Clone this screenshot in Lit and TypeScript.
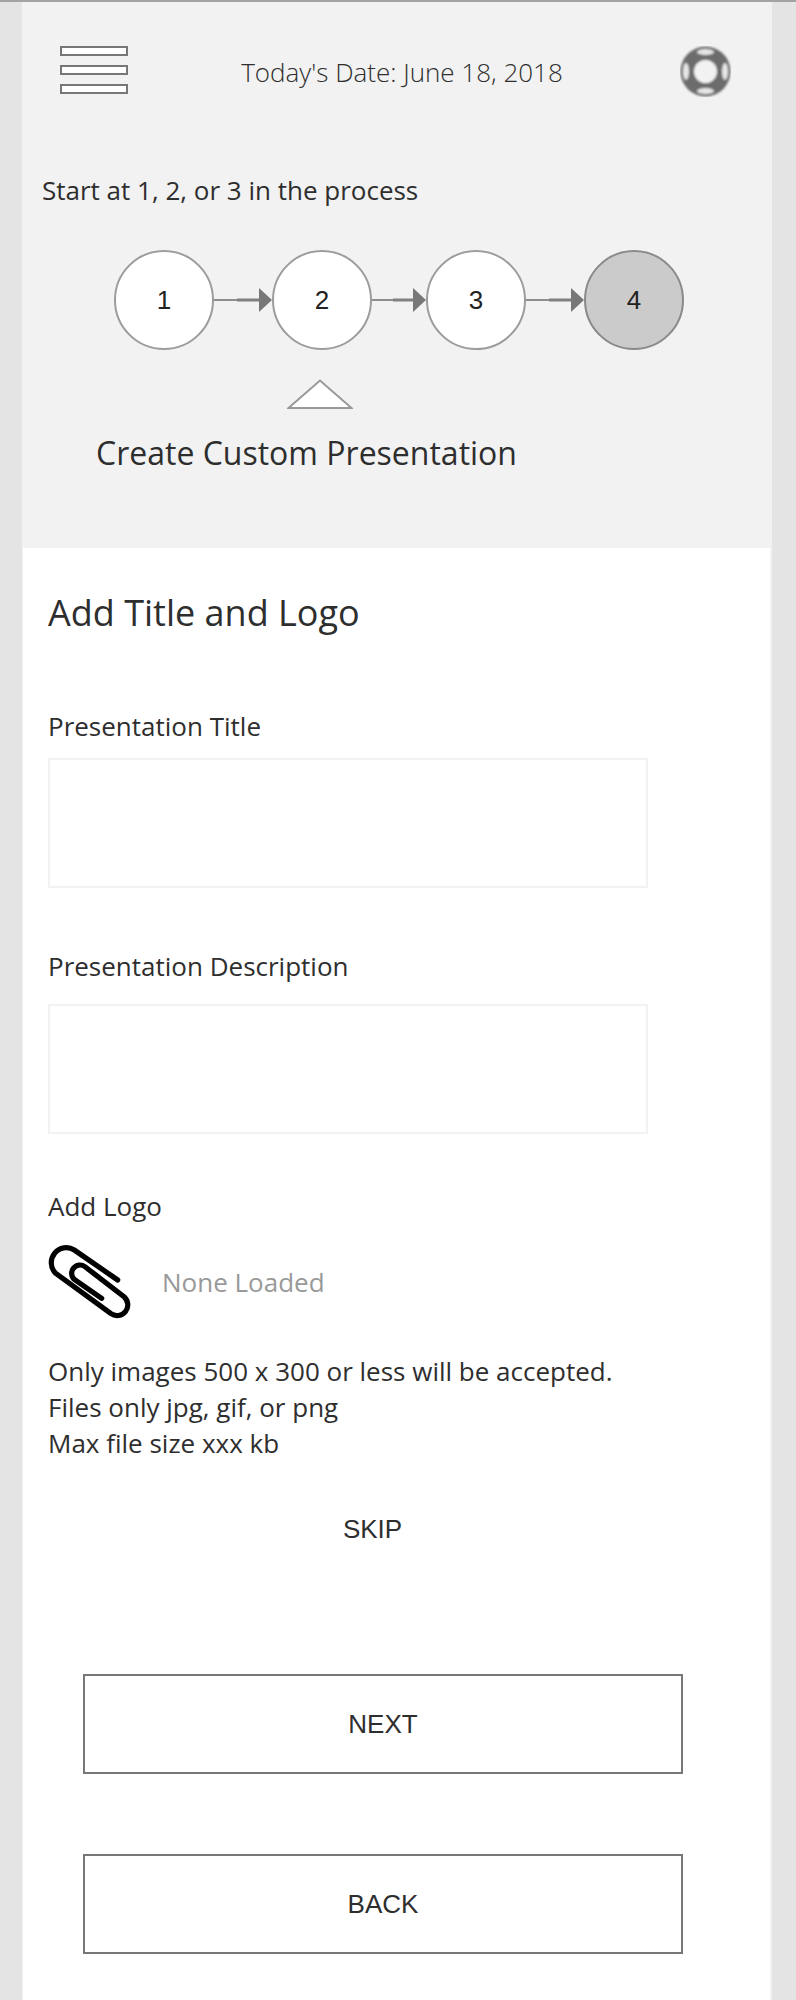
import { LitElement, html, css } from 'lit';
import { customElement } from 'lit/decorators.js';

const steps = ['1', '2', '3', '4'];

@customElement('app-root')
export class AppRoot extends LitElement {
  static styles = css`
    :host {
      display: block;
      width: 796px;
      height: 2000px;
      overflow: hidden;
      background: #e4e4e4;
      border-top: 2px solid #a3a3a3;
      box-sizing: border-box;
      font-family: 'Open Sans', sans-serif;
      color: #2e2e2e;
    }
    .page {
      margin: 0 24px 0 22px;
      height: 1998px;
      background: #f2f2f2;
      display: flex;
      flex-direction: column;
    }
    .top {
      height: 546px;
      box-sizing: border-box;
      flex: none;
    }
    .header {
      display: flex;
      align-items: flex-start;
      padding: 44px 41px 0 38px;
      height: 124px;
      box-sizing: border-box;
    }
    .burger {
      width: 68px;
      display: flex;
      flex-direction: column;
      gap: 9px;
    }
    .burger span {
      display: block;
      height: 10px;
      box-sizing: border-box;
      background: #fff;
      border: 2px solid #777;
    }
    .date {
      flex: 1;
      text-align: center;
      font-size: 26px;
      font-weight: 300;
      line-height: 36px;
      padding-top: 8px;
      padding-right: 4px;
    }
    .buoy {
      width: 51px;
      height: 51px;
      display: block;
    }
    .hint {
      margin: 47px 0 0 20px;
      font-size: 26px;
      line-height: 34px;
    }
    .flow {
      display: flex;
      align-items: center;
      margin: 43px 0 0 92px;
    }
    .step {
      width: 100px;
      height: 100px;
      box-sizing: border-box;
      flex: none;
      border-radius: 50%;
      border: 2px solid #9c9c9c;
      background: #fff;
      display: flex;
      align-items: center;
      justify-content: center;
      font-family: 'Liberation Sans', sans-serif;
      font-size: 26px;
      color: #222;
    }
    .step.off {
      background: #cbcbcb;
      border-color: #8a8a8a;
    }
    .arrow {
      display: block;
      flex: none;
      height: 26px;
    }
    .pointer {
      display: block;
      margin: 29px 0 0 265px;
    }
    .sub {
      margin: 22px 0 0 74px;
      font-size: 32px;
      line-height: 44px;
    }
    .form {
      flex: 1;
      background: #fff;
      margin: 0 2px 0 1px;
      padding: 0 0 0 25px;
    }
    h2 {
      margin: 40px 0 0;
      font-size: 36px;
      font-weight: 400;
      line-height: 50px;
    }
    label {
      display: block;
      font-size: 26px;
      line-height: 36px;
    }
    .first {
      margin-top: 70px;
    }
    .box {
      width: 600px;
      height: 130px;
      box-sizing: border-box;
      border: 2px solid #f2f2f2;
      margin-top: 14px;
    }
    .second {
      margin-top: 60px;
    }
    .second + .box {
      margin-top: 20px;
    }
    .third {
      margin-top: 54px;
    }
    .logo {
      display: flex;
      align-items: center;
      margin-top: 20px;
    }
    .clip {
      display: block;
      width: 84px;
      height: 78px;
      flex: none;
    }
    .none {
      margin-left: 30px;
      font-size: 26px;
      color: #999;
      padding-bottom: 3px;
    }
    .rules {
      margin-top: 31px;
      font-size: 26px;
      line-height: 36px;
    }
    .skip {
      margin: 50px 0 0 0;
      width: 649px;
      text-align: center;
      font-family: 'Liberation Sans', sans-serif;
      font-size: 26px;
      line-height: 36px;
    }
    .btn {
      width: 600px;
      height: 100px;
      box-sizing: border-box;
      margin-left: 35px;
      border: 2px solid #777;
      display: flex;
      align-items: center;
      justify-content: center;
      font-family: 'Liberation Sans', sans-serif;
      font-size: 26px;
    }
    .skip + .btn {
      margin-top: 127px;
    }
    .btn + .btn {
      margin-top: 80px;
    }
  `;

  // line goes lighter then darker before the head, like the mockup
  arrowSvg(w: number) {
    const mid = Math.round((w - 13) / 2);
    return html`<svg class="arrow" width=${w} height="26" viewBox="0 0 ${w} 26">
      <line x1="0" y1="13" x2=${mid} y2="13" stroke="#8e8e8e" stroke-width="2"></line>
      <line x1=${mid} y1="13" x2=${w - 12} y2="13" stroke="#808080" stroke-width="3"></line>
      <path d="M${w - 13} 1L${w} 13L${w - 13} 25Z" fill="#777"></path>
    </svg>`;
  }

  render() {
    return html`
      <div class="page">
        <div class="top">
          <div class="header">
            <div class="burger"><span></span><span></span><span></span></div>
            <div class="date">Today's Date: June 18, 2018</div>
            <svg class="buoy" viewBox="0 0 51 51">
              <defs>
                <filter id="soft"><feGaussianBlur stdDeviation="0.8"></feGaussianBlur></filter>
              </defs>
              <g filter="url(#soft)">
                <circle cx="25.5" cy="25.5" r="25" fill="#6c6c6c"></circle>
                <circle cx="25.5" cy="25.5" r="11.5" fill="#f2f2f2"></circle>
                <g fill="#e6e6e6">
                  <ellipse cx="25.5" cy="6" rx="8.5" ry="3"></ellipse>
                  <ellipse cx="25.5" cy="45" rx="8.5" ry="3"></ellipse>
                  <ellipse cx="6" cy="25.5" rx="3" ry="8.5"></ellipse>
                  <ellipse cx="45" cy="25.5" rx="3" ry="8.5"></ellipse>
                </g>
              </g>
            </svg>
          </div>
          <div class="hint">Start at 1, 2, or 3 in the process</div>
          <div class="flow">
            ${steps.map(
              (s, i) => html`
                ${i > 0 ? this.arrowSvg(i === 2 ? 54 : 58) : ''}
                <div class="step ${s === '4' ? 'off' : ''}">${s}</div>
              `
            )}
          </div>
          <svg class="pointer" width="66" height="30" viewBox="0 0 66 30">
            <path d="M1.5 29L33 1.5L64.5 29Z" fill="#fff" stroke="#999" stroke-width="2"></path>
          </svg>
          <div class="sub">Create Custom Presentation</div>
        </div>
        <div class="form">
          <h2>Add Title and Logo</h2>
          <label class="first">Presentation Title</label>
          <div class="box"></div>
          <label class="second">Presentation Description</label>
          <div class="box"></div>
          <label class="third">Add Logo</label>
          <div class="logo">
            <svg class="clip" viewBox="0 0 84 78">
              <path d="M70.7 37L27.3 7A15 15 0 0 0 8.7 30.3L64 70.7A10.7 10.7 0 0 0 77.3 54L38 23.7A8.3 8.3 0 0 0 28 37L54.7 55.3" fill="none" stroke="#000" stroke-width="5.2" stroke-linecap="round" transform="translate(-1 -1)"></path>
            </svg>
            <span class="none">None Loaded</span>
          </div>
          <div class="rules">
            Only images 500 x 300 or less will be accepted.<br />
            Files only jpg, gif, or png<br />
            Max file size xxx kb
          </div>
          <div class="skip">SKIP</div>
          <div class="btn">NEXT</div>
          <div class="btn">BACK</div>
        </div>
      </div>
    `;
  }
}
